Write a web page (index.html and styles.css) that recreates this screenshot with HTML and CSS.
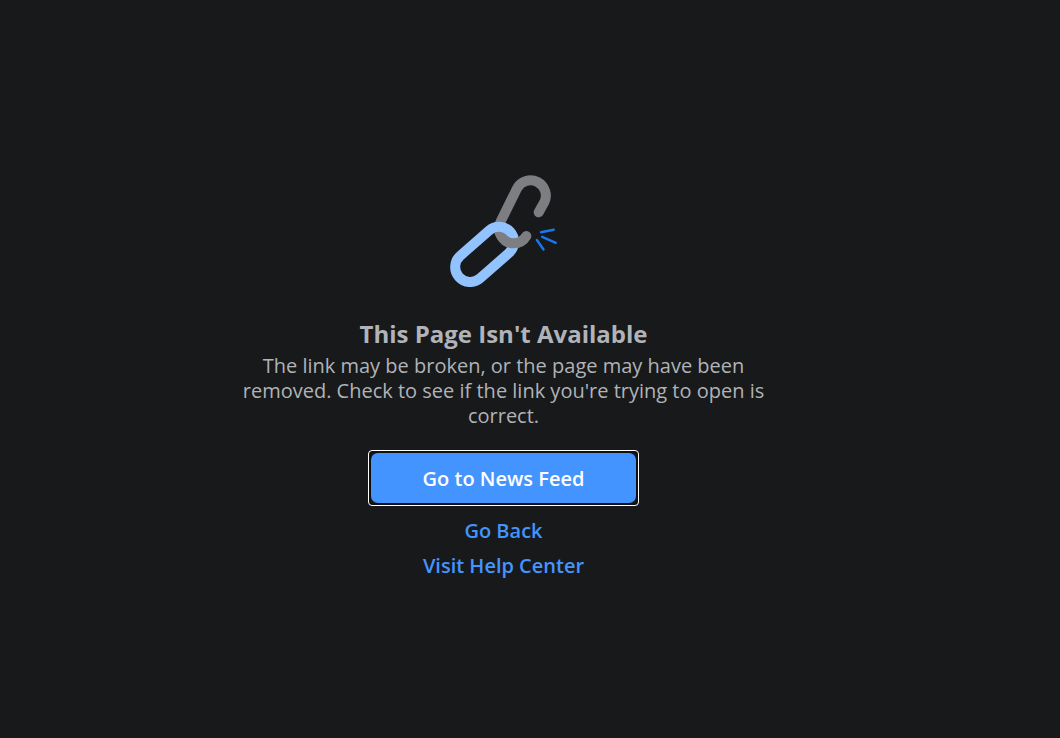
FILE: index.html
```html
<!DOCTYPE html>
<html lang="en">
<head>
    <meta charset="UTF-8">
    <meta name="viewport" content="width=device-width, initial-scale=1.0">
    <title>Page Not Found</title>
    <link rel="stylesheet" href="styles.css">
</head>
<body>
    <main class="error-page">
        <svg class="broken-link" width="113" height="112" viewBox="0 0 113 112" fill="none" aria-hidden="true">
            <g stroke-width="10">
                <path stroke="#7c7e82" stroke-linecap="round" d="M91.7 37.3L97.3 27.3A15.3 15.3 0 0 0 70.1 13.3L53.7 46.4A15 15 0 0 0 67 68.3A15 15 0 0 0 79.3 61"/>
                <path stroke="#92c3ff" d="M13.3 80.7L42.1 55.4A15 15 0 0 1 61.9 78L33.1 103.3A15 15 0 0 1 13.3 80.7Z"/>
                <!-- front part of the grey link -->
                <path stroke="#7c7e82" d="M57.5 65A15 15 0 0 0 67 68.3A15 15 0 0 0 79.3 61"/>
            </g>
            <g stroke="#1877f2" stroke-width="2.4" stroke-linecap="round">
                <path d="M94 57.3L106.7 54.8"/>
                <path d="M95.2 61.8L108.8 67.8"/>
                <path d="M89.9 65L96.5 74.5"/>
            </g>
        </svg>
        <h1>This Page Isn't Available</h1>
        <p>The link may be broken, or the page may have been removed. Check to see if the link you're trying to open is correct.</p>
        <button type="button" class="feed-btn">Go to News Feed</button>
        <a class="link" href="#back">Go Back</a>
        <a class="link" href="#help">Visit Help Center</a>
    </main>
</body>
</html>
```

FILE: styles.css
```css
body {
    margin: 0;
    background-color: #18191a;
    color: #b0b3b8;
    font-family: "Segoe UI", "Open Sans", "Noto Sans", sans-serif;
    font-size: 20px;
    line-height: 25px;
}
.error-page {
    display: flex;
    flex-direction: column;
    align-items: center;
    padding: 175px 5% 40px 0;
    text-align: center;
}
.broken-link {
    margin-bottom: 32px;
}
h1 {
    margin: 0;
    font-size: 24px;
    line-height: 30px;
    font-weight: 700;
}
p {
    max-width: 545px;
    margin: 4px 0 25px;
}
.feed-btn {
    position: relative;
    height: 50px;
    padding: 0 52px;
    border: none;
    border-radius: 7px;
    background-color: #4494ff;
    color: #fff;
    font: inherit;
    font-weight: 600;
    outline: none;
    cursor: pointer;
}
/* focus ring */
.feed-btn::after {
    content: "";
    position: absolute;
    inset: -3px;
    border: 1px solid #fff;
    border-radius: 4px;
    box-shadow: inset 0 0 0 2px #101010;
}
.link {
    margin-top: 10px;
    color: #4494ff;
    font-weight: 600;
    text-decoration: none;
}
.feed-btn + .link {
    margin-top: 15px;
}
.link:hover {
    text-decoration: underline;
}
```
